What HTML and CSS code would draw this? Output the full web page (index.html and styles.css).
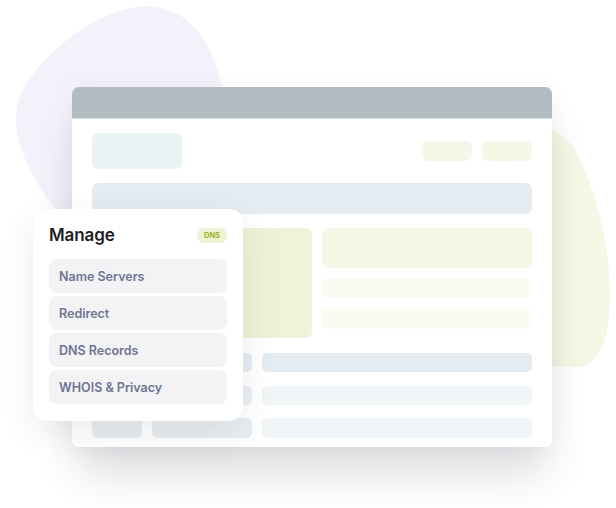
FILE: index.html
```html
<!DOCTYPE html>
<html>
<head>
<meta charset="utf-8">
<link rel="stylesheet" href="styles.css">
</head>
<body>
<div class="stage">
  <svg class="blob blob-purple" width="260" height="240" viewBox="0 0 260 240">
    <path d="M147 6 C120 6 80 25 50 55 C25 80 14 100 16 125 C18 150 35 185 60 215 L235 215 L235 150 C228 110 222 80 212 55 C200 28 182 8 147 6 Z" fill="#f4f1fa"/>
  </svg>
  <svg class="blob blob-green" width="120" height="250" viewBox="0 0 120 250">
    <path d="M0 2 C20 0 40 2 55 25 C75 60 90 120 90 170 C90 215 78 242 58 242 C40 242 20 240 0 238 Z" fill="#f5f8e4"/>
  </svg>

  <div class="browser">
    <div class="bar"></div>
    <div class="content">
      <div class="row-top">
        <div class="logo-box"></div>
        <div class="btns">
          <div class="btn"></div>
          <div class="btn"></div>
        </div>
      </div>
      <div class="wide"></div>
      <div class="split">
        <div class="big"></div>
        <div class="side">
          <div class="s1"></div>
          <div class="s2"></div>
          <div class="s3"></div>
        </div>
      </div>
      <div class="table">
        <div class="trow r1"><div class="c a"></div><div class="c b"></div><div class="c d"></div></div>
        <div class="trow r2"><div class="c a"></div><div class="c b"></div><div class="c d"></div></div>
        <div class="trow r3"><div class="c a"></div><div class="c b"></div><div class="c d"></div></div>
      </div>
    </div>
  </div>

  <div class="card">
    <div class="card-head">
      <span class="title">Manage</span>
      <span class="badge">DNS</span>
    </div>
    <div class="items">
      <div class="item">Name Servers</div>
      <div class="item">Redirect</div>
      <div class="item">DNS Records</div>
      <div class="item">WHOIS &amp; Privacy</div>
    </div>
  </div>
</div>
</body>
</html>
```

FILE: styles.css
```css
html, body {
  margin: 0;
  padding: 0;
  background: #ffffff;
}
body {
  font-family: "Inter", "Open Sans", "Liberation Sans", sans-serif;
}
.stage {
  position: relative;
  width: 616px;
  height: 508px;
  overflow: hidden;
}
.blob {
  position: absolute;
}
.blob-purple {
  left: 0;
  top: 0;
}
.blob-green {
  left: 520px;
  top: 125px;
}
.browser {
  position: absolute;
  left: 72px;
  top: 87px;
  width: 480px;
  height: 360px;
  background: #ffffff;
  border-radius: 7px;
  box-shadow: 0 32px 40px -6px rgba(40, 45, 60, 0.16), 0 0 24px rgba(40, 45, 60, 0.04);
  overflow: hidden;
  display: flex;
  flex-direction: column;
}
.bar {
  height: 31px;
  background: #b1bbc0;
  border-bottom: 1px solid #d9e0e3;
  flex: none;
}
.content {
  padding: 14px 20px 8px;
  display: flex;
  flex-direction: column;
}
.row-top {
  display: flex;
  justify-content: space-between;
  align-items: center;
  height: 36px;
}
.logo-box {
  width: 90px;
  height: 36px;
  border-radius: 6px;
  background: #eaf2f5;
}
.btns {
  display: flex;
  gap: 10px;
}
.btn {
  width: 50px;
  height: 20px;
  border-radius: 6px;
  background: #f5f8e6;
}
.wide {
  margin-top: 14px;
  height: 31px;
  border-radius: 6px;
  background: #e4ecf2;
}
.split {
  margin-top: 14px;
  display: flex;
  gap: 10px;
}
.big {
  width: 220px;
  height: 110px;
  border-radius: 6px;
  background: linear-gradient(90deg, #e9eecf, #eff3da);
}
.side {
  flex: 1;
  display: flex;
  flex-direction: column;
}
.s1 {
  height: 40px;
  border-radius: 6px;
  background: #f5f8e6;
}
.s2 {
  margin-top: 10px;
  height: 20px;
  border-radius: 6px;
  background: #fafbf1;
}
.s3 {
  margin-top: 11px;
  height: 20px;
  border-radius: 6px;
  background: #fafbf1;
}
.table {
  margin-top: 15px;
  display: flex;
  flex-direction: column;
  gap: 14px;
}
.trow {
  display: flex;
  gap: 10px;
  height: 19px;
}
.trow.r3 {
  margin-top: -1px;
  height: 20px;
}
.c {
  border-radius: 5px;
}
.c.a { width: 50px; }
.c.b { width: 100px; }
.c.d { flex: 1; }
.r1 .c { background: #e4ecf2; }
.r2 .c.a, .r2 .c.b { background: #e9eff3; }
.r2 .c.d { background: #f0f5f8; }
.r3 .c.a, .r3 .c.b { background: #e8eef2; }
.r3 .c.d { background: #f0f5f8; }

.card {
  position: absolute;
  left: 33px;
  top: 209px;
  width: 210px;
  height: 212px;
  box-sizing: border-box;
  padding: 16px 16px 0;
  background: #ffffff;
  border-radius: 14px;
  box-shadow: 0 12px 34px rgba(40, 45, 60, 0.09);
}
.card-head {
  display: flex;
  justify-content: space-between;
  align-items: center;
  height: 20px;
}
.title {
  font-size: 17px;
  font-weight: 600;
  color: #1d1d24;
  letter-spacing: -0.1px;
}
.badge {
  width: 30px;
  height: 15px;
  border-radius: 8px;
  background: #eef3d3;
  color: #9bb02a;
  font-size: 7.5px;
  font-weight: 700;
  display: flex;
  align-items: center;
  justify-content: center;
}
.items {
  margin-top: 14px;
  display: flex;
  flex-direction: column;
  gap: 3px;
}
.item {
  height: 34px;
  box-sizing: border-box;
  padding-left: 10px;
  display: flex;
  align-items: center;
  border-radius: 8px;
  background: #f3f3f6;
  color: #6f7592;
  font-size: 12.5px;
  font-weight: 600;
}
```
